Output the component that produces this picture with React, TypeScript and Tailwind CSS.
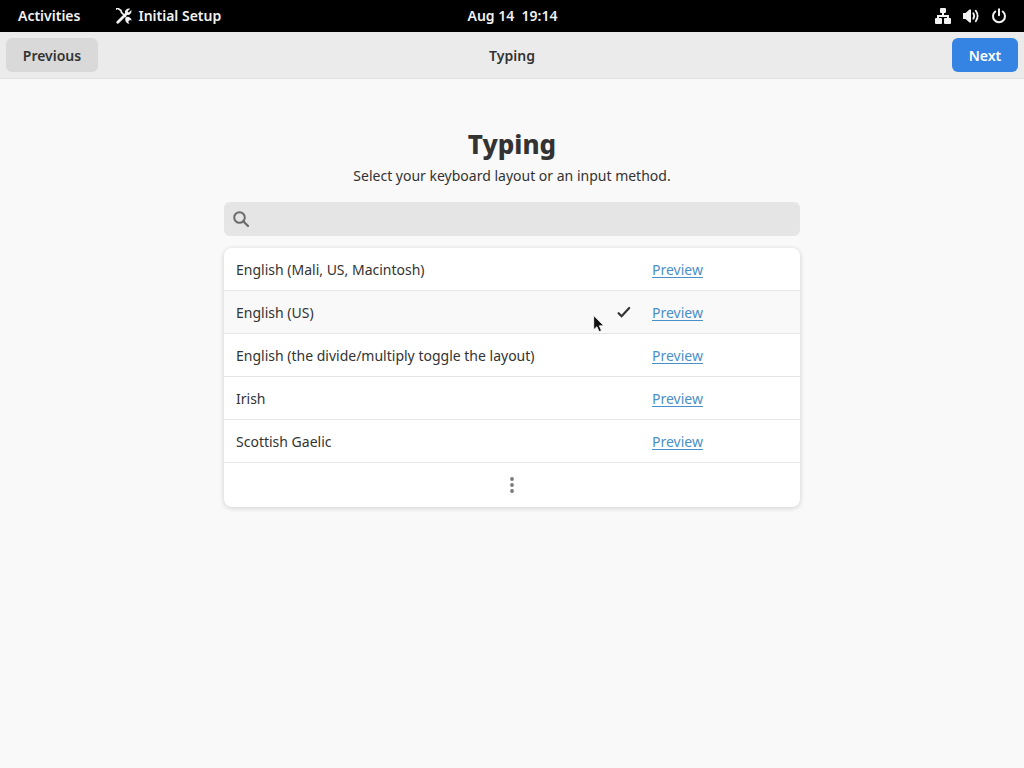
import { useState } from "react";

const layouts = [
  "English (Mali, US, Macintosh)",
  "English (US)",
  "English (the divide/multiply toggle the layout)",
  "Irish",
  "Scottish Gaelic",
];

function ToolsIcon() {
  return (
    <svg className="size-4" viewBox="0 0 16 16" fill="none" stroke="currentColor" aria-hidden="true">
      <path d="M0 1.4 1.4 0 5 2.6 5.4 4.4 10 9" strokeWidth="1.7" />
      <path d="M1.8 14.2 10.6 5.6" strokeWidth="2.8" strokeLinecap="round" />
      <path d="M14.2.8 11.6 3.2 12.8 4.4 15.3 2C16 4.4 14.4 6.9 12 6.9 10 6.9 8.8 5.4 9 3.6 9.3 1.4 11.8-.2 14.2.8Z" fill="currentColor" stroke="none" />
      <path d="M9.2 11.6C9 9.6 10.6 8.6 12 8.8c2 .2 3.4 1.8 3.6 3.6l-1.8-.4-1.6 1.8 1.2 2c-2.4 0-4-1.8-4.2-4.2Z" fill="currentColor" stroke="none" />
    </svg>
  );
}

function NetworkIcon() {
  return (
    <svg className="size-4" viewBox="0 0 16 16" fill="currentColor" aria-hidden="true">
      <rect x="5" y="0" width="6" height="5" rx="1" />
      <path d="M7 5h2v2h5v3h-2V9H4v1H2V7h5z" />
      <rect x="0" y="10" width="7" height="6" rx="1" />
      <rect x="9" y="10" width="7" height="6" rx="1" />
    </svg>
  );
}

function VolumeIcon() {
  return (
    <svg className="size-4" viewBox="0 0 16 16" fill="none" stroke="currentColor" aria-hidden="true">
      <path d="M0 5h2.5L6.5 1.5H8v13H6.5L2.5 11H0z" fill="currentColor" stroke="none" />
      <path d="M10.3 5.2q1.8 2.8 0 5.6" strokeWidth="1.8" strokeLinecap="round" />
      <path d="M12.8 2.8q3.6 5.2 0 10.4" strokeWidth="1.8" strokeLinecap="round" />
    </svg>
  );
}

function PowerIcon() {
  return (
    <svg className="size-4" viewBox="0 0 16 16" fill="none" stroke="currentColor" strokeWidth="2" strokeLinecap="round" aria-hidden="true">
      <path d="M4.3 3.5a6 6 0 1 0 7.4 0M8 1.2v6" />
    </svg>
  );
}

function SearchIcon() {
  return (
    <svg className="size-4 text-[#6b6b6b]" viewBox="0 0 16 16" fill="none" stroke="currentColor" strokeWidth="2" aria-hidden="true">
      <circle cx="6.5" cy="6.5" r="5.3" />
      <path d="m10.3 10.3 4.7 4.7" strokeWidth="2.3" strokeLinecap="round" />
    </svg>
  );
}

function CheckIcon() {
  return (
    <svg className="size-4" viewBox="0 0 16 16" fill="none" stroke="currentColor" strokeWidth="2.2" strokeLinecap="round" aria-hidden="true">
      <path d="m2.6 8.2 3 3 7.6-8.2" />
    </svg>
  );
}

function Pointer() {
  return (
    <svg className="pointer-events-none absolute top-6 left-[369px] h-5 w-3" viewBox="0 0 12 20" aria-hidden="true">
      <path d="M.7.5v14.2l3.2-3 2.2 5 2.4-1.1-2.2-4.8h4.5z" fill="#111" stroke="#fff" strokeWidth=".8" />
    </svg>
  );
}

export default function App() {
  const [selected, setSelected] = useState(1);
  const [query, setQuery] = useState("");

  return (
    <div className="min-h-screen bg-[#f9f9f9] font-['Noto_Sans',sans-serif] text-sm text-[#333]">
      <nav className="grid h-8 grid-cols-[1fr_auto_1fr] items-center bg-black pr-[17px] pl-[18px] font-semibold text-[#f2f2f2]">
        <div className="flex items-center gap-9">
          <button type="button">Activities</button>
          <button type="button" className="flex items-center gap-1.5">
            <ToolsIcon />
            Initial Setup
          </button>
        </div>
        <button type="button" className="whitespace-pre">{"Aug 14  19:14"}</button>
        <button type="button" aria-label="System menu" className="flex items-center gap-3 justify-self-end">
          <NetworkIcon />
          <VolumeIcon />
          <PowerIcon />
        </button>
      </nav>

      <header className="grid h-[47px] grid-cols-[1fr_auto_1fr] items-center border-b border-[#e0e0e0] bg-[#ebebeb] px-1.5 font-semibold">
        <button type="button" className="h-[34px] w-[92px] justify-self-start rounded-md bg-[#d9d9d9] pt-0.5">
          Previous
        </button>
        <span className="pt-0.5">Typing</span>
        <button type="button" className="h-[34px] w-[66px] justify-self-end rounded-md bg-[#3584e4] pt-0.5 text-white">
          Next
        </button>
      </header>

      <main className="mx-auto max-w-xl pt-[47px]">
        <h1 className="text-center text-[26px] leading-9 font-extrabold">Typing</h1>
        <p className="mt-1 text-center leading-5">Select your keyboard layout or an input method.</p>

        <label className="mt-4 flex h-[34px] items-center gap-2 rounded-md bg-[#e5e5e5] px-[9px]">
          <SearchIcon />
          <input
            type="text"
            aria-label="Search layouts"
            value={query}
            onChange={(event) => setQuery(event.target.value)}
            className="min-w-0 flex-1 bg-transparent outline-none"
          />
        </label>

        <ul className="mt-3 rounded-lg bg-white shadow-[0_1px_4px_1px_rgba(0,0,0,0.13)]">
          {layouts.map((name, index) => (
            <li
              key={name}
              className={`relative flex h-[43px] items-center border-b border-[#e6e6e6] px-3 pt-0.5 first:rounded-t-lg ${
                selected === index ? "bg-[#f9f9f9]" : ""
              }`}
            >
              <button
                type="button"
                aria-pressed={selected === index}
                onClick={() => setSelected(index)}
                className="flex h-full flex-1 items-center justify-between pr-5 text-left"
              >
                {name}
                {selected === index && <CheckIcon />}
              </button>
              <a href="#preview" className="w-[136px] text-[#4a90c8] underline underline-offset-2">
                Preview
              </a>
              {index === 1 && <Pointer />}
            </li>
          ))}
          <li>
            <button type="button" aria-label="More layouts" className="flex h-11 w-full items-center justify-center">
              <svg className="size-4 text-[#7a7a7a]" viewBox="0 0 16 16" fill="currentColor" aria-hidden="true">
                <circle cx="8" cy="2" r="1.9" />
                <circle cx="8" cy="8" r="1.9" />
                <circle cx="8" cy="14" r="1.9" />
              </svg>
            </button>
          </li>
        </ul>
      </main>
    </div>
  );
}
